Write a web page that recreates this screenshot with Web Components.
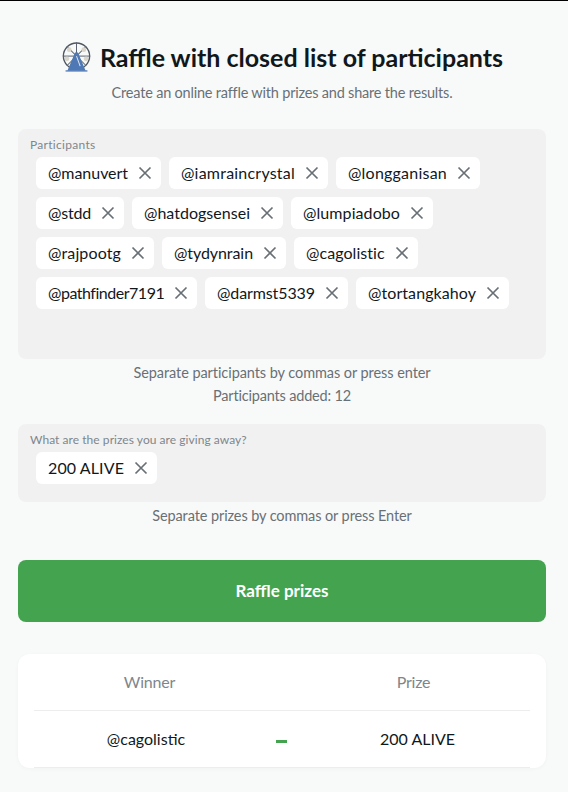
<!DOCTYPE html>
<html>
<head>
<meta charset="utf-8">
<style>
  html, body { margin: 0; padding: 0; }
  body { background: #f8faf9; font-family: Lato, "Noto Sans", sans-serif; color: #11181c; border-top: 1px solid #000; height: 791px; overflow: hidden; }
</style>
</head>
<body>
<raffle-page>
  <raffle-header title="Raffle with closed list of participants" subtitle="Create an online raffle with prizes and share the results."></raffle-header>
  <tag-box label="Participants" height="230" style="margin-top:27px;--label-ls:.3px">
    <tag-chip w="80">@manuvert</tag-chip><tag-chip w="114">@iamraincrystal</tag-chip><tag-chip w="99">@longganisan</tag-chip>
    <tag-chip w="43">@stdd</tag-chip><tag-chip w="106">@hatdogsensei</tag-chip><tag-chip w="97">@lumpiadobo</tag-chip>
    <tag-chip w="73">@rajpootg</tag-chip><tag-chip w="79">@tydynrain</tag-chip><tag-chip w="79">@cagolistic</tag-chip>
    <tag-chip w="116">@pathfinder7191</tag-chip><tag-chip w="98">@darmst5339</tag-chip><tag-chip w="108">@tortangkahoy</tag-chip>
  </tag-box>
  <hint-line style="margin-top:2px;letter-spacing:-.07px">Separate participants by commas or press enter</hint-line>
  <hint-line style="letter-spacing:-.18px">Participants added: 12</hint-line>
  <tag-box label="What are the prizes you are giving away?" height="78" style="margin-top:17px;--label-ls:.05px">
    <tag-chip w="76">200 ALIVE</tag-chip>
  </tag-box>
  <hint-line style="margin-top:2px;letter-spacing:-.1px">Separate prizes by commas or press Enter</hint-line>
  <raffle-button style="margin-top:33px">Raffle prizes</raffle-button>
  <winner-table style="margin-top:32px" winner="@cagolistic" prize="200 ALIVE"></winner-table>
</raffle-page>
<script>
class RafflePage extends HTMLElement {
  constructor() {
    super();
    this.attachShadow({ mode: 'open' });
    this.shadowRoot.innerHTML = `
      <style>
        :host { display: flex; flex-direction: column; padding: 0 22px 0 18px; }
      </style>
      <slot></slot>`;
  }
}

class RaffleHeader extends HTMLElement {
  constructor() {
    super();
    this.attachShadow({ mode: 'open' });
  }
  connectedCallback() {
    const spokes = [0, 45, 90, 135].map(a =>
      `<line x1="17" y1="2" x2="17" y2="32" transform="rotate(${a} 17 17)" stroke="#5b6470" stroke-width="1.1"/>`).join('');
    const seats = [[6.5, 20], [27.5, 20], [9, 10], [25, 10]].map(p =>
      `<circle cx="${p[0]}" cy="${p[1]}" r="2.6" fill="#d9d5cb"/>`).join('');
    this.shadowRoot.innerHTML = `
      <style>
        :host { display: block; text-align: center; }
        .title { display: flex; justify-content: center; align-items: center; gap: 8px; margin-top: 39px; height: 34px; }
        svg { width: 31px; height: 34px; flex: none; }
        h1 { margin: 0; font: 700 25px/34px Lato, sans-serif; letter-spacing: 0; color: #11181c; white-space: nowrap; }
        p { margin: 10px 0 0; font: 400 14.5px/18px Lato, sans-serif; letter-spacing: -.2px; color: #687076; }
      </style>
      <div class="title">
        <svg viewBox="0 0 34 34">
          <circle cx="17" cy="16" r="14.4" fill="none" stroke="#4e5661" stroke-width="1.5"/>
          <g transform="translate(0 -1)">${spokes}${seats}</g>
          <path d="M15.4 12 L18.6 12 L27 32 L7 32 Z" fill="#4f79b5"/>
          <rect x="5" y="31.6" width="24" height="1.4" fill="#4f79b5"/>
          <line x1="17" y1="16" x2="21" y2="27" stroke="#dfe6f0" stroke-width="1.1"/>
        </svg>
        <h1>${this.getAttribute('title')}</h1>
      </div>
      <p>${this.getAttribute('subtitle')}</p>`;
  }
}

class TagBox extends HTMLElement {
  constructor() {
    super();
    this.attachShadow({ mode: 'open' });
  }
  connectedCallback() {
    this.shadowRoot.innerHTML = `
      <style>
        :host { display: block; box-sizing: border-box; height: ${this.getAttribute('height')}px; background: #f1f1f1; border-radius: 8px; padding: 8px 12px; }
        .label { font: 400 12px/15px Lato, sans-serif; letter-spacing: var(--label-ls, 0); color: #7e868c; }
        .tags { display: flex; flex-wrap: wrap; gap: 8px; padding: 5px 6px 0; }
      </style>
      <div class="label">${this.getAttribute('label')}</div>
      <div class="tags"><slot></slot></div>`;
  }
}

class TagChip extends HTMLElement {
  constructor() {
    super();
    this.attachShadow({ mode: 'open' });
    this.shadowRoot.innerHTML = `
      <style>
        :host { display: inline-flex; align-items: center; gap: 10px; height: 32px; padding: 0 9px 0 12px; background: #fff; border-radius: 6px; font: 400 16px/32px Lato, sans-serif; color: #11181c; white-space: nowrap; }
        .text { display: block; }
        svg { width: 14px; height: 14px; flex: none; }
      </style>
      <span class="text"><slot></slot></span>
      <svg viewBox="0 0 14 14"><path d="M1.5 1.5 L12.5 12.5 M12.5 1.5 L1.5 12.5" stroke="#687076" stroke-width="1.7" fill="none"/></svg>`;
  }
  connectedCallback() {
    // stretch the fallback font to the text width of the original
    const text = this.shadowRoot.querySelector('.text');
    const w = Number(this.getAttribute('w'));
    const natural = text.getBoundingClientRect().width;
    text.style.width = w + 'px';
    text.style.letterSpacing = ((w - natural) / this.textContent.length) + 'px';
  }
}

class HintLine extends HTMLElement {
  constructor() {
    super();
    this.attachShadow({ mode: 'open' });
    this.shadowRoot.innerHTML = `
      <style>
        :host { display: block; text-align: center; font: 400 14.5px/23px Lato, sans-serif; color: #687076; }
      </style>
      <slot></slot>`;
  }
}

class RaffleButton extends HTMLElement {
  constructor() {
    super();
    this.attachShadow({ mode: 'open' });
    this.shadowRoot.innerHTML = `
      <style>
        :host { display: flex; justify-content: center; align-items: center; height: 62px; background: #43a34f; border-radius: 8px; color: #fff; font: 700 17px/20px Lato, sans-serif; }
      </style>
      <slot></slot>`;
  }
}

class WinnerTable extends HTMLElement {
  constructor() {
    super();
    this.attachShadow({ mode: 'open' });
  }
  connectedCallback() {
    this.shadowRoot.innerHTML = `
      <style>
        :host { display: block; box-sizing: border-box; height: 114px; padding: 0 16px; background: #fff; border-radius: 12px; box-shadow: 0 1px 4px rgba(0,0,0,.03); }
        .row { display: grid; align-items: center; justify-items: center; border-bottom: 1px solid #eceeee; }
        .head { grid-template-columns: 231px 36px 225px; height: 56px; color: #7e868c; font: 400 16px/20px Lato, sans-serif; letter-spacing: -.2px; }
        .body { grid-template-columns: 224px 47px 1fr; height: 56px; color: #11181c; font: 400 16px/20px Lato, sans-serif; }
        .dash { width: 11px; height: 3px; background: #43a34f; margin-top: 4px; }
      </style>
      <div class="row head"><span>Winner</span><span></span><span>Prize</span></div>
      <div class="row body"><span>${this.getAttribute('winner')}</span><span class="dash"></span><span>${this.getAttribute('prize')}</span></div>`;
  }
}

customElements.define('raffle-page', RafflePage);
customElements.define('raffle-header', RaffleHeader);
customElements.define('tag-box', TagBox);
customElements.define('tag-chip', TagChip);
customElements.define('hint-line', HintLine);
customElements.define('raffle-button', RaffleButton);
customElements.define('winner-table', WinnerTable);
</script>
</body>
</html>
